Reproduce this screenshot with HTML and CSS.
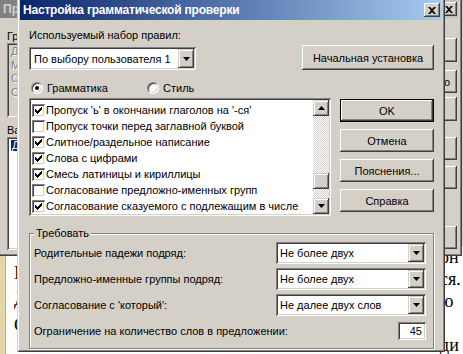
FILE: index.html
```html
<!DOCTYPE html>
<html lang="ru">
<head>
<meta charset="utf-8">
<title>Настройка грамматической проверки</title>
<link rel="stylesheet" href="styles.css">
</head>
<body>
<div class="doc">
  <div class="doc-strip"></div>
  <div class="doc-left">
    <div>I</div>
    <div>Д</div>
    <div>С</div>
  </div>
  <div class="doc-right">
    <div>он</div>
    <div>ся.</div>
    <div>ю</div>
    <div>&nbsp;</div>
    <div>ди</div>
  </div>
</div>

<div class="backwin">
  <div class="bw-title">
    <span class="bw-title-text">Пр</span>
    <span class="tbtn"><svg width="8" height="7" viewBox="0 0 8 7"><path d="M0 0h2l2 2 2-2h2L5 3.5 8 7H6L4 5 2 7H0l3-3.5z" fill="#000"/></svg></span>
  </div>
  <div class="bw-body">
    <div class="bw-left">
      <div class="bw-label">Гр</div>
      <div class="bw-box">
        <div class="dis">Д</div>
        <div class="dis">М</div>
        <div class="dis">С</div>
        <div class="dis">С</div>
      </div>
      <div class="bw-label">Ва</div>
      <div class="bw-list">
        <div class="bw-sel">Д</div>
      </div>
    </div>
    <div class="bw-right">
      <div class="btn bb"></div>
      <div class="btn bb bb-o">о</div>
      <div class="btn bb"></div>
      <div class="btn bb"></div>
      <div class="btn bb"></div>
      <div class="btn bb"></div>
    </div>
  </div>
</div>

<div class="dialog">
  <div class="dlg-title">
    <span class="dlg-title-text">Настройка грамматической проверки</span>
    <span class="tbtn"><svg width="8" height="7" viewBox="0 0 8 7"><path d="M0 0h2l2 2 2-2h2L5 3.5 8 7H6L4 5 2 7H0l3-3.5z" fill="#000"/></svg></span>
  </div>
  <div class="dlg-body">
    <div class="lbl">Используемый набор правил:</div>
    <div class="row-set">
      <div class="combo combo-set">
        <div class="combo-text">По выбору пользователя 1</div>
        <div class="combo-btn"><svg width="7" height="4" viewBox="0 0 7 4"><path d="M0 0h7L3.5 4z" fill="#000"/></svg></div>
      </div>
      <div class="btn btn-reset">Начальная установка</div>
    </div>
    <div class="row-radio">
      <div class="radio-item radio-first"><span class="radio on"><span class="dot"></span></span><span>Грамматика</span></div>
      <div class="radio-item"><span class="radio"></span><span>Стиль</span></div>
    </div>
    <div class="row-main">
      <div class="listbox">
        <div class="items">
          <div class="item"><span class="chk on"><svg width="7" height="7" viewBox="0 0 7 7"><path d="M0 2h1v3H0zM1 3h1v3H1zM2 4h1v3H2zM3 3h1v3H3zM4 2h1v3H4zM5 1h1v3H5zM6 0h1v3H6z" fill="#000"/></svg></span><span>Пропуск 'ь' в окончании глаголов на '-ся'</span></div>
          <div class="item"><span class="chk"></span><span>Пропуск точки перед заглавной буквой</span></div>
          <div class="item"><span class="chk on"><svg width="7" height="7" viewBox="0 0 7 7"><path d="M0 2h1v3H0zM1 3h1v3H1zM2 4h1v3H2zM3 3h1v3H3zM4 2h1v3H4zM5 1h1v3H5zM6 0h1v3H6z" fill="#000"/></svg></span><span>Слитное/раздельное написание</span></div>
          <div class="item"><span class="chk on"><svg width="7" height="7" viewBox="0 0 7 7"><path d="M0 2h1v3H0zM1 3h1v3H1zM2 4h1v3H2zM3 3h1v3H3zM4 2h1v3H4zM5 1h1v3H5zM6 0h1v3H6z" fill="#000"/></svg></span><span>Слова с цифрами</span></div>
          <div class="item"><span class="chk on"><svg width="7" height="7" viewBox="0 0 7 7"><path d="M0 2h1v3H0zM1 3h1v3H1zM2 4h1v3H2zM3 3h1v3H3zM4 2h1v3H4zM5 1h1v3H5zM6 0h1v3H6z" fill="#000"/></svg></span><span>Смесь латиницы и кириллицы</span></div>
          <div class="item"><span class="chk"></span><span>Согласование предложно-именных групп</span></div>
          <div class="item"><span class="chk on"><svg width="7" height="7" viewBox="0 0 7 7"><path d="M0 2h1v3H0zM1 3h1v3H1zM2 4h1v3H2zM3 3h1v3H3zM4 2h1v3H4zM5 1h1v3H5zM6 0h1v3H6z" fill="#000"/></svg></span><span>Согласование сказуемого с подлежащим в числе</span></div>
        </div>
        <div class="vscroll">
          <div class="sbtn"><svg width="7" height="4" viewBox="0 0 7 4"><path d="M3.5 0L7 4H0z" fill="#000"/></svg></div>
          <div class="track"><div class="thumb"></div></div>
          <div class="sbtn"><svg width="7" height="4" viewBox="0 0 7 4"><path d="M0 0h7L3.5 4z" fill="#000"/></svg></div>
        </div>
      </div>
      <div class="side-btns">
        <div class="btn btn-def">OK</div>
        <div class="btn">Отмена</div>
        <div class="btn">Пояснения...</div>
        <div class="btn">Справка</div>
      </div>
    </div>
    <fieldset class="group">
      <legend>Требовать</legend>
      <div class="grid">
        <div class="glbl">Родительные падежи подряд:</div>
        <div class="combo combo-g">
          <div class="combo-text">Не более двух</div>
          <div class="combo-btn"><svg width="7" height="4" viewBox="0 0 7 4"><path d="M0 0h7L3.5 4z" fill="#000"/></svg></div>
        </div>
        <div class="glbl">Предложно-именные группы подряд:</div>
        <div class="combo combo-g">
          <div class="combo-text">Не более двух</div>
          <div class="combo-btn"><svg width="7" height="4" viewBox="0 0 7 4"><path d="M0 0h7L3.5 4z" fill="#000"/></svg></div>
        </div>
        <div class="glbl">Согласование с 'который':</div>
        <div class="combo combo-g">
          <div class="combo-text">Не далее двух слов</div>
          <div class="combo-btn"><svg width="7" height="4" viewBox="0 0 7 4"><path d="M0 0h7L3.5 4z" fill="#000"/></svg></div>
        </div>
        <div class="glbl">Ограничение на количество слов в предложении:</div>
        <div class="edit">45</div>
      </div>
    </fieldset>
  </div>
</div>
</body>
</html>
```

FILE: styles.css
```css
* { box-sizing: border-box; }
html, body { margin: 0; padding: 0; }
body {
  width: 463px;
  height: 354px;
  overflow: hidden;
  position: relative;
  background: #d4d0c8;
  font-family: "Liberation Sans", Arial, sans-serif;
  font-size: 11px;
  color: #000;
}

/* ---------- document behind ---------- */
.doc {
  position: absolute;
  left: 0; right: 0; top: 246px; bottom: 0;
  background: #fff;
  display: flex;
  font-family: "Liberation Serif", "Times New Roman", serif;
  font-size: 18px;
}
.doc-strip {
  width: 6px;
  background: #e6d6aa;
  border-right: 1px solid #bfae80;
}
.doc-left {
  padding-top: 14px;
  padding-left: 8px;
  line-height: 26px;
}
.doc-right {
  margin-left: auto;
  width: 23px;
  line-height: 22px;
  white-space: nowrap;
}

/* ---------- shared 3D pieces ---------- */
.btn {
  display: flex;
  align-items: center;
  justify-content: center;
  background: #d4d0c8;
  box-shadow: inset -1px -1px #404040, inset 1px 1px #fff, inset -2px -2px #808080;
  white-space: nowrap;
  overflow: hidden;
}
.tbtn {
  width: 16px;
  height: 14px;
  display: flex;
  align-items: center;
  justify-content: center;
  background: #d4d0c8;
  box-shadow: inset -1px -1px #404040, inset 1px 1px #fff, inset -2px -2px #808080;
  margin-left: auto;
  flex: none;
}
.tbtn svg { margin-left: -1px; }

/* ---------- background dialog ---------- */
.backwin {
  position: absolute;
  left: -4px;
  top: -4px;
  width: 466px;
  height: 260px;
  background: #d4d0c8;
  padding: 4px;
  box-shadow: inset 1px 1px #d4d0c8, inset -1px -1px #404040, inset 2px 2px #fff, inset -2px -2px #808080;
  display: flex;
  flex-direction: column;
}
.bw-title {
  height: 18px;
  flex: none;
  display: flex;
  align-items: center;
  padding-left: 3px;
  padding-right: 1px;
  background: linear-gradient(90deg, #808080, #c0c0c0);
  color: #d4d0c8;
  font-weight: bold;
  font-size: 12px;
}
.bw-title-text { white-space: nowrap; }
.bw-body {
  flex: 1;
  display: flex;
  justify-content: space-between;
}
.bw-left {
  width: 220px;
  padding-left: 7px;
}
.bw-label {
  line-height: 13px;
  white-space: nowrap;
  margin-top: 12px;
}
.bw-box {
  height: 74px;
  padding: 2px 4px;
  box-shadow: inset 1px 1px #808080, inset -1px -1px #fff, inset 2px 2px #404040, inset -2px -2px #d4d0c8;
  line-height: 13.5px;
  white-space: nowrap;
  overflow: hidden;
}
.bw-box + .bw-label { margin-top: 7px; }
.dis { color: #808080; text-shadow: 1px 1px #fff; }
.bw-list {
  height: 113px;
  background: #fff;
  padding: 3px 2px;
  box-shadow: inset 1px 1px #808080, inset -1px -1px #fff, inset 2px 2px #404040, inset -2px -2px #d4d0c8;
}
.bw-sel {
  background: #0a246a;
  color: #fff;
  line-height: 11px;
  margin-left: 2px;
  padding-left: 1px;
  width: 60px;
}
.bw-right {
  width: 112px;
  display: flex;
  flex-direction: column;
  margin-right: 1px;
}
.bb { height: 23px; }
.bb-o { justify-content: flex-end; padding-right: 7px; }
.bb:nth-child(1) { margin-top: 20px; height: 24px; }
.bb:nth-child(2) { margin-top: 8px; }
.bb:nth-child(3) { margin-top: 4px; height: 24px; }
.bb:nth-child(4) { margin-top: 16px; }
.bb:nth-child(5) { margin-top: 6px; }
.bb:nth-child(6) { margin-top: 37px; }

/* ---------- main dialog ---------- */
.dialog {
  position: absolute;
  left: 17px;
  top: -3px;
  width: 428px;
  height: 355px;
  background: #d4d0c8;
  padding: 3px 4px 4px 3px;
  box-shadow: inset 1px 1px #d4d0c8, inset -1px -1px #404040, inset 2px 2px #fff, inset -2px -2px #808080;
  display: flex;
  flex-direction: column;
}
.dlg-title {
  height: 20px;
  flex: none;
  display: flex;
  align-items: center;
  padding-left: 3px;
  padding-right: 1px;
  background: linear-gradient(90deg, #0a246a, #a6caf0);
  color: #fff;
  font-weight: bold;
  font-size: 12px;
}
.dlg-title-text { white-space: nowrap; letter-spacing: -0.2px; }
.dlg-body {
  padding: 9px 7px 0 9px;
  display: flex;
  flex-direction: column;
}
.lbl { line-height: 13px; }

.row-set {
  margin-top: 3px;
  display: flex;
  justify-content: space-between;
  align-items: flex-start;
}
.combo {
  display: flex;
  background: #fff;
  padding: 2px;
  box-shadow: inset 1px 1px #808080, inset -1px -1px #fff, inset 2px 2px #404040, inset -2px -2px #d4d0c8;
}
.combo-text {
  flex: 1;
  display: flex;
  align-items: center;
  white-space: nowrap;
  overflow: hidden;
}
.combo-btn {
  width: 16px;
  flex: none;
  display: flex;
  align-items: center;
  justify-content: center;
  background: #d4d0c8;
  box-shadow: inset -1px -1px #404040, inset 1px 1px #d4d0c8, inset 2px 2px #fff, inset -2px -2px #808080;
}
.combo-set {
  width: 167px;
  height: 23px;
  margin-top: 2px;
}
.combo-set .combo-text { padding-left: 3px; }
.btn-reset {
  width: 132px;
  height: 25px;
}

.row-radio {
  margin-top: 11px;
  height: 13px;
  display: flex;
  padding-left: 2px;
}
.radio-item {
  display: flex;
  align-items: center;
  gap: 4px;
}
.radio-first { width: 116px; }
.radio {
  width: 12px;
  height: 12px;
  border-radius: 50%;
  border: 1px solid;
  border-color: #808080 #fff #fff #808080;
  background: #fff;
  box-shadow: inset 1px 1px #404040, inset -1px -1px #d4d0c8;
  display: flex;
  align-items: center;
  justify-content: center;
  flex: none;
}
.dot {
  width: 4px;
  height: 4px;
  border-radius: 50%;
  background: #000;
}

.row-main {
  margin-top: 4px;
  display: flex;
  gap: 9px;
}
.listbox {
  width: 302px;
  height: 118px;
  background: #fff;
  padding: 2px;
  display: flex;
  box-shadow: inset 1px 1px #808080, inset -1px -1px #fff, inset 2px 2px #404040, inset -2px -2px #d4d0c8;
}
.items {
  flex: 1;
  padding-top: 2px;
  overflow: hidden;
}
.item {
  height: 16px;
  display: flex;
  align-items: center;
  gap: 1px;
  padding-left: 1px;
  white-space: nowrap;
}
.chk {
  width: 13px;
  height: 13px;
  flex: none;
  background: #fff;
  box-shadow: inset 1px 1px #808080, inset -1px -1px #fff, inset 2px 2px #404040, inset -2px -2px #d4d0c8;
  display: flex;
  align-items: center;
  justify-content: center;
}
.vscroll {
  width: 16px;
  flex: none;
  display: flex;
  flex-direction: column;
}
.sbtn {
  height: 16px;
  flex: none;
  display: flex;
  align-items: center;
  justify-content: center;
  background: #d4d0c8;
  box-shadow: inset -1px -1px #404040, inset 1px 1px #d4d0c8, inset 2px 2px #fff, inset -2px -2px #808080;
}
.track {
  flex: 1;
  background-color: #fff;
  background-image: repeating-conic-gradient(#d4d0c8 0 25%, #fff 0 50%);
  background-size: 2px 2px;
}
.thumb {
  height: 16px;
  margin-top: 57px;
  background: #d4d0c8;
  box-shadow: inset -1px -1px #404040, inset 1px 1px #d4d0c8, inset 2px 2px #fff, inset -2px -2px #808080;
}
.side-btns {
  width: 94px;
  padding-top: 1px;
  display: flex;
  flex-direction: column;
  gap: 7px;
}
.side-btns .btn { height: 23px; }
.btn-def {
  border: 1px solid #000;
}

.group {
  margin: 11px 0 0 0;
  padding: 2px 7px 6px 4px;
  border: 1px solid #808080;
  box-shadow: inset 1px 1px #fff, 1px 1px #fff;
  min-width: 0;
}
.group legend {
  padding: 0 2px;
  line-height: 13px;
  background: #d4d0c8;
}
.grid {
  display: grid;
  grid-template-columns: minmax(0, 1fr) 150px;
  grid-auto-rows: 22px;
  row-gap: 4px;
  align-items: center;
}
.grid > .edit { height: 18px; }
.glbl { white-space: nowrap; }
.combo-g {
  height: 22px;
}
.combo-g .combo-text { padding-left: 2px; }
.edit {
  justify-self: end;
  width: 28px;
  background: #fff;
  padding: 2px 4px 2px 2px;
  display: flex;
  align-items: center;
  justify-content: flex-end;
  box-shadow: inset 1px 1px #808080, inset -1px -1px #fff, inset 2px 2px #404040, inset -2px -2px #d4d0c8;
}
```
